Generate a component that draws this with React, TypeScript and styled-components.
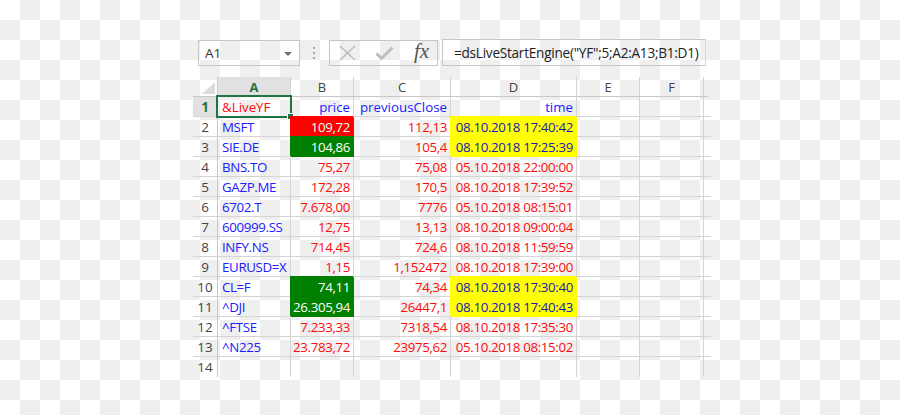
import React from "react";
import styled, { createGlobalStyle, css } from "styled-components";

const GlobalStyle = createGlobalStyle`
  body {
    margin: 0;
    font-family: 'Open Sans', 'Noto Sans', sans-serif;
    background-color: #ffffff;
    background-image: conic-gradient(#efefef 0 25%, #ffffff 0 50%, #efefef 0 75%, #ffffff 0);
    background-size: 40px 40px;
  }
`;

const Page = styled.div`
  padding: 39px 0 0 193px;
`;

const Toolbar = styled.div`
  display: flex;
  align-items: flex-end;
  height: 27px;
  margin-left: 5px;
`;

const NameBox = styled.div`
  box-sizing: border-box;
  width: 102px;
  height: 26px;
  border: 1px solid #c6c6c6;
  display: flex;
  align-items: center;
  justify-content: space-between;
  padding: 0 7px 0 6px;
  font-size: 13.5px;
  color: #333;
`;

const Caret = styled.span`
  width: 0;
  height: 0;
  border-left: 4px solid transparent;
  border-right: 4px solid transparent;
  border-top: 4px solid #707070;
  margin-top: 2px;
`;

const Grip = styled.svg`
  margin: 0 14px 0 13px;
  align-self: center;
`;

const ButtonBox = styled.div`
  box-sizing: border-box;
  width: 109px;
  height: 26px;
  border: 1px solid #c6c6c6;
  display: flex;
  align-items: center;
  padding-left: 9px;
  gap: 19px;
`;

const Fx = styled.span`
  font-family: 'Liberation Serif', serif;
  font-style: italic;
  font-size: 21px;
  color: #555;
  line-height: 1;
  margin-left: 1px;
  margin-top: -3px;
`;

const FormulaBox = styled.div`
  box-sizing: border-box;
  width: 264px;
  height: 27px;
  margin-left: 4px;
  border: 1px solid #c6c6c6;
  border-right-color: #d8d8d8;
  display: flex;
  align-items: center;
  padding-left: 11px;
  font-size: 13.6px;
  letter-spacing: -0.25px;
  color: #222;
  white-space: nowrap;
`;

const Sheet = styled.div`
  margin-top: 11px;
  display: grid;
  grid-template-columns: 25px 73px 63px 97px 126px 63px 64px 4px;
  grid-auto-rows: 20px;
  width: max-content;
`;

const Corner = styled.div`
  box-sizing: border-box;
  border-right: 1px solid #c8c8c8;
  border-bottom: 1px solid #c8c8c8;
  display: flex;
  align-items: flex-end;
  justify-content: flex-end;
  padding: 0 2px 2px 0;
`;

const ColHead = styled.div<{ $active?: boolean; $edge?: boolean }>`
  box-sizing: border-box;
  border-right: ${(p) => (p.$edge ? "none" : "1px solid #d4d4d4")};
  border-bottom: 1px solid #c8c8c8;
  display: flex;
  align-items: center;
  justify-content: center;
  font-size: 13px;
  color: #444;
  ${(p) =>
    p.$active &&
    css`
      background: #e1e1e1;
      color: #217346;
      font-weight: 700;
    `}
`;

const RowHead = styled.div<{ $active?: boolean; $last?: boolean }>`
  box-sizing: border-box;
  border-right: 1px solid #c8c8c8;
  border-bottom: ${(p) => (p.$last ? "none" : "1px solid #d4d4d4")};
  display: flex;
  align-items: center;
  justify-content: center;
  font-size: 13.5px;
  color: #444;
  ${(p) =>
    p.$active &&
    css`
      background: #e1e1e1;
      color: #217346;
      font-weight: 700;
    `}
`;

type Tone = "blue" | "red" | "onRed" | "onGreen" | "onYellow";

const toneColor: Record<Tone, string> = {
  blue: "#2020ff",
  red: "#ff0a0a",
  onRed: "#dcffff",
  onGreen: "#ffffff",
  onYellow: "#1a1ab4",
};

const Cell = styled.div<{ $fill?: string; $tone: Tone; $right?: boolean; $last?: boolean; $edge?: boolean; $tight?: boolean }>`
  position: relative;
  box-sizing: border-box;
  border-right: ${(p) => (p.$edge ? "none" : "1px solid #d4d4d4")};
  border-bottom: ${(p) => (p.$last ? "none" : "1px solid #d4d4d4")};
  display: flex;
  align-items: center;
  justify-content: ${(p) => (p.$right ? "flex-end" : "flex-start")};
  padding: 0 3px 0 4px;
  font-size: 13.3px;
  letter-spacing: ${(p) => (p.$tight ? "-0.35px" : "0")};
  white-space: nowrap;
  color: ${(p) => toneColor[p.$tone]};
  ${(p) =>
    p.$fill &&
    css`
      background: ${p.$fill};
      border-color: ${p.$fill};
      box-shadow: -1px -1px 0 0 ${p.$fill};
    `}
`;

const Selection = styled.div`
  position: absolute;
  left: -2px;
  top: -2px;
  right: -2px;
  bottom: -2px;
  border: 2px solid #217346;
  pointer-events: none;
`;

const Handle = styled.div`
  position: absolute;
  right: -4px;
  bottom: -4px;
  width: 5px;
  height: 5px;
  background: #217346;
  border: 1px solid #ffffff;
`;

type Row = {
  sym: string;
  price: string;
  prev: string;
  time: string;
  priceFill?: "red" | "green";
  hot?: boolean;
};

const rows: Row[] = [
  { sym: "MSFT", price: "109,72", prev: "112,13", time: "08.10.2018 17:40:42", priceFill: "red", hot: true },
  { sym: "SIE.DE", price: "104,86", prev: "105,4", time: "08.10.2018 17:25:39", priceFill: "green", hot: true },
  { sym: "BNS.TO", price: "75,27", prev: "75,08", time: "05.10.2018 22:00:00" },
  { sym: "GAZP.ME", price: "172,28", prev: "170,5", time: "08.10.2018 17:39:52" },
  { sym: "6702.T", price: "7.678,00", prev: "7776", time: "05.10.2018 08:15:01" },
  { sym: "600999.SS", price: "12,75", prev: "13,13", time: "08.10.2018 09:00:04" },
  { sym: "INFY.NS", price: "714,45", prev: "724,6", time: "08.10.2018 11:59:59" },
  { sym: "EURUSD=X", price: "1,15", prev: "1,152472", time: "08.10.2018 17:39:00" },
  { sym: "CL=F", price: "74,11", prev: "74,34", time: "08.10.2018 17:30:40", priceFill: "green", hot: true },
  { sym: "^DJI", price: "26.305,94", prev: "26447,1", time: "08.10.2018 17:40:43", priceFill: "green", hot: true },
  { sym: "^FTSE", price: "7.233,33", prev: "7318,54", time: "08.10.2018 17:35:30" },
  { sym: "^N225", price: "23.783,72", prev: "23975,62", time: "05.10.2018 08:15:02" },
];

const fills = { red: "#ff0000", green: "#008000", yellow: "#ffff00" };

const Blank = ({ last, edge }: { last?: boolean; edge?: boolean }) => (
  <Cell $tone="red" $last={last} $edge={edge} />
);

const App: React.FC = () => {
  return (
    <Page>
      <GlobalStyle />
      <Toolbar>
        <NameBox>
          A1
          <Caret />
        </NameBox>
        <Grip width="2" height="12" viewBox="0 0 2 12">
          <rect x="0" y="0" width="2" height="2" fill="#a8a8a8" />
          <rect x="0" y="5" width="2" height="2" fill="#a8a8a8" />
          <rect x="0" y="10" width="2" height="2" fill="#a8a8a8" />
        </Grip>
        <ButtonBox>
          <svg width="17" height="16" viewBox="0 0 17 16">
            <path d="M1 1 L16 15 M16 1 L1 15" stroke="#bdbdbd" strokeWidth="1.6" fill="none" />
          </svg>
          <svg width="19" height="15" viewBox="0 0 19 15">
            <path d="M1.5 7.5 L6.5 12.5 L17.5 1.5" stroke="#bdbdbd" strokeWidth="3" fill="none" />
          </svg>
          <Fx>fx</Fx>
        </ButtonBox>
        <FormulaBox>=dsLiveStartEngine("YF";5;A2:A13;B1:D1)</FormulaBox>
      </Toolbar>

      <Sheet>
        <Corner>
          <svg width="13" height="12" viewBox="0 0 13 12">
            <polygon points="13,0 13,12 0,12" fill="#dcdcdc" />
          </svg>
        </Corner>
        <ColHead $active>A</ColHead>
        <ColHead>B</ColHead>
        <ColHead>C</ColHead>
        <ColHead>D</ColHead>
        <ColHead>E</ColHead>
        <ColHead>F</ColHead>
        <ColHead $edge />

        <RowHead $active>1</RowHead>
        <Cell $tone="red">
          &amp;LiveYF
          <Selection>
            <Handle />
          </Selection>
        </Cell>
        <Cell $tone="blue" $right>price</Cell>
        <Cell $tone="blue" $right>previousClose</Cell>
        <Cell $tone="blue" $right>time</Cell>
        <Blank />
        <Blank />
        <Blank edge />

        {rows.map((r, i) => {
          const priceTone: Tone = r.priceFill === "red" ? "onRed" : r.priceFill === "green" ? "onGreen" : "red";
          return (
            <React.Fragment key={r.sym}>
              <RowHead>{i + 2}</RowHead>
              <Cell $tone="blue" $tight>{r.sym}</Cell>
              <Cell $tone={priceTone} $right $tight $fill={r.priceFill ? fills[r.priceFill] : undefined}>
                {r.price}
              </Cell>
              <Cell $tone="red" $right $tight>{r.prev}</Cell>
              <Cell $tone={r.hot ? "onYellow" : "red"} $right $tight $fill={r.hot ? fills.yellow : undefined}>
                {r.time}
              </Cell>
              <Blank />
              <Blank />
              <Blank edge />
            </React.Fragment>
          );
        })}

        <RowHead $last>14</RowHead>
        <Blank last />
        <Blank last />
        <Blank last />
        <Blank last />
        <Blank last />
        <Blank last />
        <Blank last edge />
      </Sheet>
    </Page>
  );
};

export default App;
